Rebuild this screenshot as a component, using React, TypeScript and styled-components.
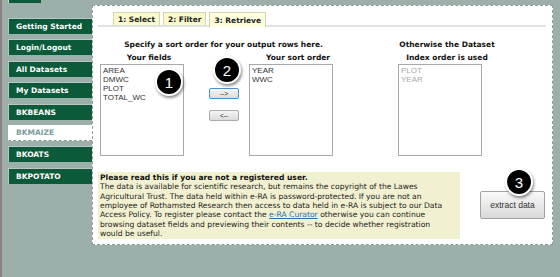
import React from "react";
import styled, { createGlobalStyle } from "styled-components";

const GlobalStyle = createGlobalStyle`
  html, body {
    margin: 0;
    padding: 0;
    background: #9cafab;
  }
`;

const Page = styled.div`
  display: flex;
  align-items: flex-start;
  width: 560px;
  height: 277px;
  box-sizing: border-box;
  border-left: 2px solid #8b7f80;
  background: #9cafab;
  overflow: hidden;
`;

const Sidebar = styled.div`
  width: 90px;
  padding-left: 6px;
  box-sizing: border-box;
`;

const TopStub = styled.div`
  width: 32px;
  height: 3px;
  background: #0b5a3a;
  border-left: 1px solid #c9d3d0;
`;

const NavList = styled.div`
  display: flex;
  flex-direction: column;
  gap: 5.4px;
  margin-top: 15px;
`;

const NavItem = styled.div<{ $active?: boolean }>`
  height: 16px;
  box-sizing: border-box;
  display: flex;
  align-items: center;
  padding-left: 7px;
  background: ${(p) => (p.$active ? "#ffffff" : "#0b5a3a")};
  border-top: 1px solid ${(p) => (p.$active ? "#ffffff" : "#b9c6c2")};
  border-left: 1px solid ${(p) => (p.$active ? "#ffffff" : "#b9c6c2")};
  border-bottom: ${(p) => (p.$active ? "1px dashed #8a9a96" : "none")};
  color: ${(p) => (p.$active ? "#7a9c9c" : "#ffffff")};
  font-family: "DejaVu Sans", Verdana, sans-serif;
  font-weight: bold;
  font-size: 7.5px;
  white-space: nowrap;
`;

const Panel = styled.div`
  position: relative;
  margin-top: 5px;
  width: 461px;
  height: 240px;
  box-sizing: border-box;
  background: #ffffff;
  border: 1px dashed #8f9c99;
  padding: 0 6px;
`;

const TabBar = styled.div`
  display: flex;
  gap: 3px;
  margin: 6px 0 0 -1px;
  padding-left: 15px;
  width: 448px;
  box-sizing: border-box;
  border-bottom: 2px solid #e2e2e2;
`;

const Tab = styled.div<{ $active?: boolean }>`
  height: ${(p) => (p.$active ? "15px" : "13px")};
  margin-bottom: ${(p) => (p.$active ? "-2px" : "0")};
  box-sizing: border-box;
  padding: 0 4px;
  display: flex;
  align-items: center;
  background: ${(p) => (p.$active ? "#ffffde" : "#f9f9cc")};
  border: 1px solid #d3d3b8;
  border-bottom: none;
  font-family: "DejaVu Sans", Verdana, sans-serif;
  font-weight: bold;
  font-size: 7.5px;
  color: #222;
  white-space: nowrap;
`;

const SortGrid = styled.div`
  display: grid;
  grid-template-columns: 84px 65px 84px 65px 84px;
  grid-template-rows: 13px 13px 92px;
  margin-top: 11px;
  margin-left: 1px;
`;

const Heading = styled.div<{ $span?: string }>`
  grid-column: ${(p) => p.$span || "auto"};
  display: flex;
  justify-content: center;
  padding-left: 14px;
  font-family: "DejaVu Sans", Verdana, sans-serif;
  font-weight: bold;
  font-size: 7.5px;
  line-height: 13px;
  color: #111;
  white-space: nowrap;
`;

const ListBox = styled.div<{ $col: number; $disabled?: boolean }>`
  grid-column: ${(p) => p.$col};
  grid-row: 3;
  box-sizing: border-box;
  border: 1px solid #a9a9a9;
  padding: 1px 2px;
  font-family: "Liberation Sans", Arial, sans-serif;
  font-size: 8px;
  line-height: 9px;
  color: ${(p) => (p.$disabled ? "#a8a8a8" : "#333333")};
`;

const ButtonColumn = styled.div`
  grid-column: 2;
  grid-row: 3;
  display: flex;
  flex-direction: column;
  gap: 11px;
  padding: 24px 0 0 25px;
`;

const MoveButton = styled.div<{ $focused?: boolean }>`
  width: 30px;
  height: 11px;
  box-sizing: border-box;
  display: flex;
  align-items: center;
  justify-content: center;
  border: 1px solid ${(p) => (p.$focused ? "#4b8fd0" : "#acacac")};
  border-radius: 2px;
  background: linear-gradient(#f4f4f4, #dcdcdc);
  font-family: "Liberation Sans", Arial, sans-serif;
  font-size: 6.5px;
  color: #222;
`;

const Footer = styled.div`
  display: flex;
  align-items: flex-start;
  margin-top: 16px;
`;

const Notice = styled.div`
  width: 362px;
  height: 67px;
  box-sizing: border-box;
  margin-left: -1px;
  padding: 1px 2px;
  background: #f1f0d0;
  font-family: "DejaVu Sans", Verdana, sans-serif;
  font-size: 7.6px;
  line-height: 9.35px;
  color: #222;
  white-space: nowrap;
`;

const NoticeTitle = styled.div`
  font-weight: bold;
  color: #111;
`;

const Link = styled.span`
  color: #2a6ebb;
  text-decoration: underline;
`;

const ExtractButton = styled.div`
  margin: 19px 0 0 20px;
  width: 65px;
  height: 28px;
  box-sizing: border-box;
  display: flex;
  align-items: center;
  justify-content: center;
  border: 1px solid #a3a3a3;
  border-radius: 2px;
  background: linear-gradient(#fafafa, #d8d8d8);
  font-family: "Liberation Sans", Arial, sans-serif;
  font-size: 8.5px;
  color: #333;
`;

const Callout = styled.div<{ $left: number; $top: number }>`
  position: absolute;
  left: ${(p) => p.$left}px;
  top: ${(p) => p.$top}px;
  width: 28px;
  height: 28px;
  box-sizing: border-box;
  border-radius: 50%;
  border: 2px solid #ffffff;
  background: #000;
  box-shadow: 1px 2px 3px rgba(0, 0, 0, 0.45);
  display: flex;
  align-items: center;
  justify-content: center;
  font-family: "Liberation Sans", Arial, sans-serif;
  font-size: 15px;
  color: #fff;
`;

const navItems = [
  "Getting Started",
  "Login/Logout",
  "All Datasets",
  "My Datasets",
  "BKBEANS",
  "BKMAIZE",
  "BKOATS",
  "BKPOTATO",
];

export default function App() {
  return (
    <>
      <GlobalStyle />
      <Page>
        <Sidebar>
          <TopStub />
          <NavList>
            {navItems.map((n) => (
              <NavItem key={n} $active={n === "BKMAIZE"}>
                {n}
              </NavItem>
            ))}
          </NavList>
        </Sidebar>
        <Panel>
          <TabBar>
            <Tab>1: Select</Tab>
            <Tab>2: Filter</Tab>
            <Tab $active>3: Retrieve</Tab>
          </TabBar>
          <SortGrid>
            <Heading $span="1 / 4">Specify a sort order for your output rows here.</Heading>
            <Heading $span="5">Otherwise the Dataset</Heading>
            <Heading $span="1">Your fields</Heading>
            <Heading $span="3">Your sort order</Heading>
            <Heading $span="5">Index order is used</Heading>
            <ListBox $col={1}>
              <div>AREA</div>
              <div>DMWC</div>
              <div>PLOT</div>
              <div>TOTAL_WC</div>
            </ListBox>
            <ButtonColumn>
              <MoveButton $focused>--&gt;</MoveButton>
              <MoveButton>&lt;--</MoveButton>
            </ButtonColumn>
            <ListBox $col={3}>
              <div>YEAR</div>
              <div>WWC</div>
            </ListBox>
            <ListBox $col={5} $disabled>
              <div>PLOT</div>
              <div>YEAR</div>
            </ListBox>
          </SortGrid>
          <Footer>
            <Notice>
              <NoticeTitle>Please read this if you are not a registered user.</NoticeTitle>
              The data is available for scientific research, but remains the copyright of the Lawes
              <br />
              Agricultural Trust. The data held within e-RA is password-protected. If you are not an
              <br />
              employee of Rothamsted Research then access to data held in e-RA is subject to our Data
              <br />
              Access Policy. To register please contact the <Link>e-RA Curator</Link> otherwise you can continue
              <br />
              browsing dataset fields and previewing their contents -- to decide whether registration
              <br />
              would be useful.
            </Notice>
            <ExtractButton>extract data</ExtractButton>
          </Footer>
          <Callout $left={62} $top={62}>1</Callout>
          <Callout $left={120} $top={50}>2</Callout>
          <Callout $left={412} $top={162}>3</Callout>
        </Panel>
      </Page>
    </>
  );
}
